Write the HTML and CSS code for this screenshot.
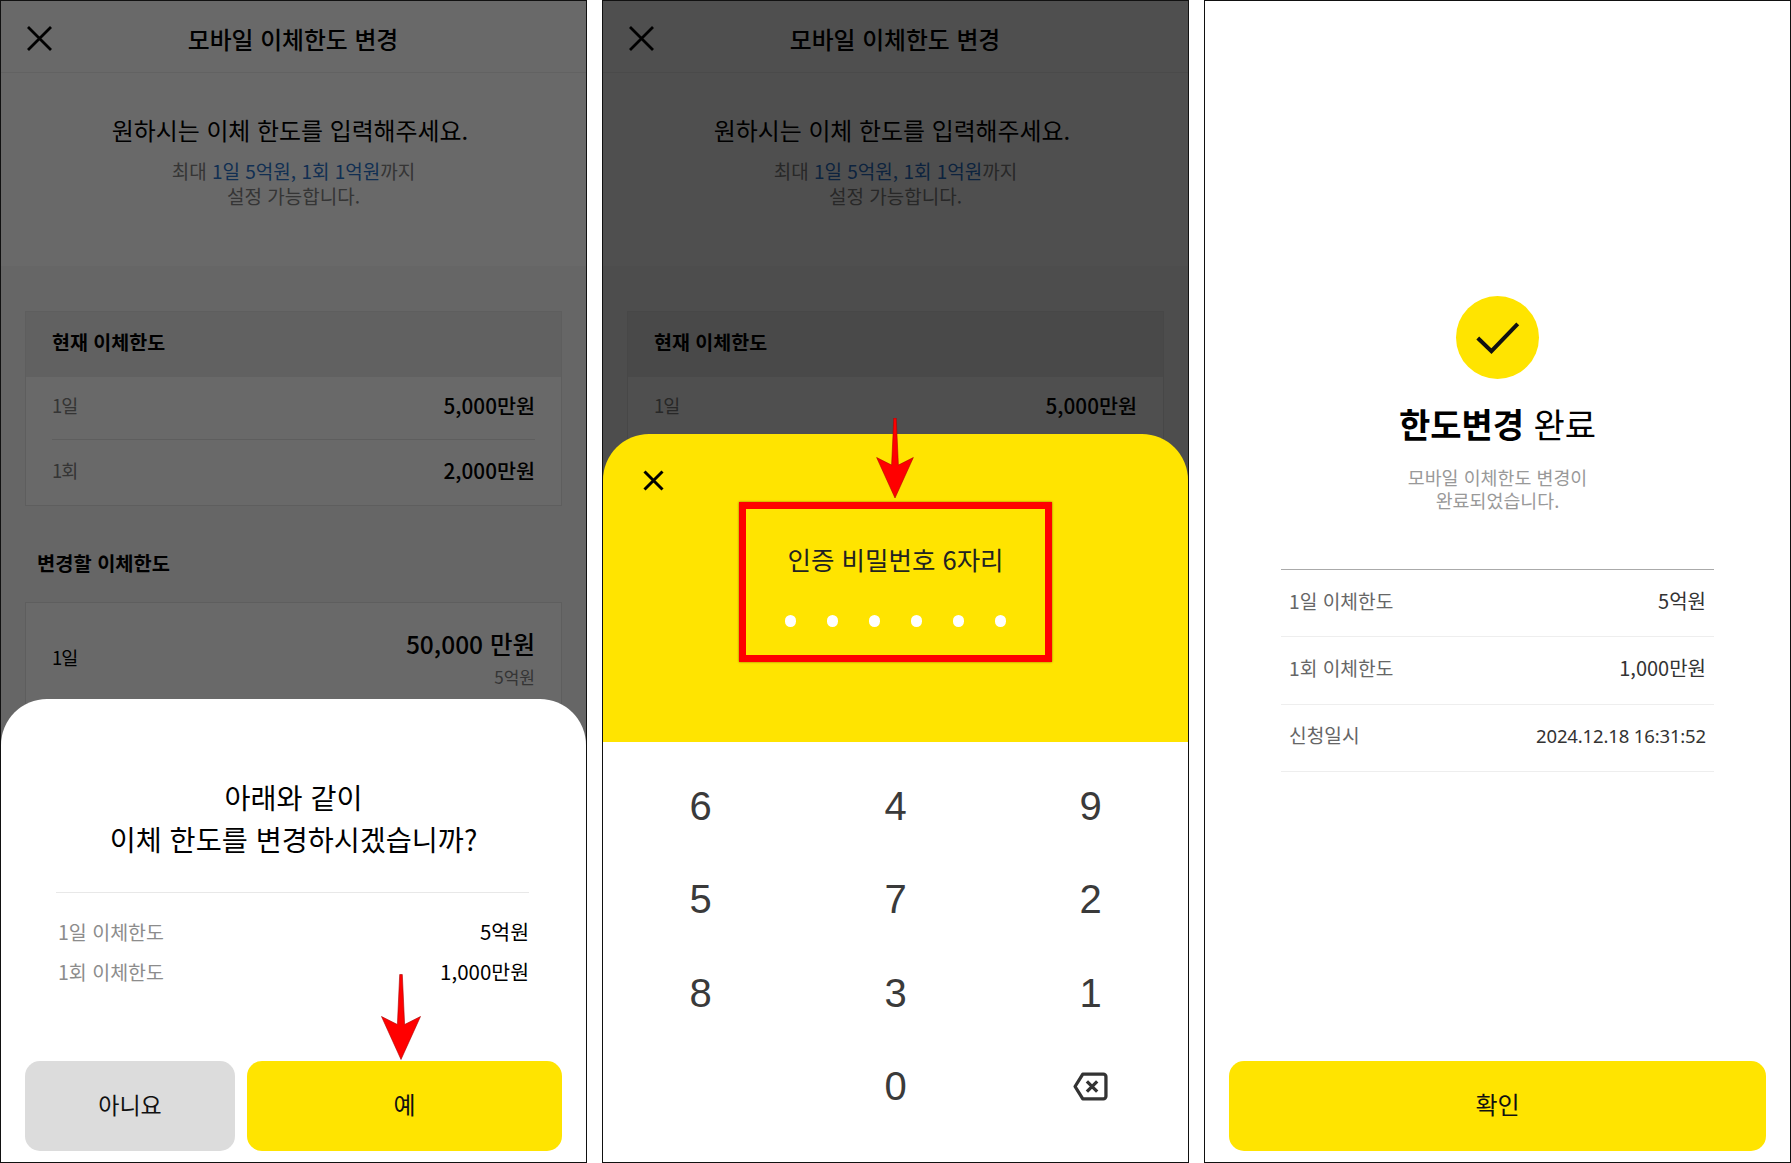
FILE: index.html
```html
<!DOCTYPE html>
<html lang="ko">
<head>
<meta charset="utf-8">
<title>모바일 이체한도 변경</title>
<link rel="stylesheet" href="styles.css">
</head>
<body>
<main class="page">

  <section class="panel">
    <header class="top">
      <svg class="x-icon" viewBox="0 0 25 25"><path d="M1 1 24 24M24 1 1 24"/></svg>
      <h1 class="top-title">모바일 이체한도 변경</h1>
    </header>
    <div class="intro">
      <p class="intro-lead">원하시는 이체 한도를 입력해주세요.</p>
      <p class="intro-sub">최대 <em>1일 5억원, 1회 1억원</em>까지<br>설정 가능합니다.</p>
    </div>
    <div class="content">
      <div class="card">
        <h2 class="card-head">현재 이체한도</h2>
        <div class="card-row"><span class="card-key">1일</span><strong class="card-val">5,000만원</strong></div>
        <div class="card-row"><span class="card-key">1회</span><strong class="card-val">2,000만원</strong></div>
      </div>
      <h2 class="section-title">변경할 이체한도</h2>
      <div class="card">
        <div class="input-row">
          <span class="input-key">1일</span>
          <div class="input-val"><strong>50,000 만원</strong><small>5억원</small></div>
        </div>
      </div>
    </div>
    <div class="dim dim-light"></div>
    <div class="sheet">
      <h2 class="sheet-title">아래와 같이<br>이체 한도를 변경하시겠습니까?</h2>
      <hr class="sheet-rule">
      <dl class="sheet-list">
        <div class="sheet-row"><dt>1일 이체한도</dt><dd>5억원</dd></div>
        <div class="sheet-row"><dt>1회 이체한도</dt><dd>1,000만원</dd></div>
      </dl>
      <div class="sheet-actions">
        <button class="btn btn-no">아니요</button>
        <button class="btn btn-yes">예</button>
      </div>
    </div>
    <svg class="arrow arrow-yes" viewBox="0 0 40 85"><path d="M18.700 0H21.300L23.600 50 39.500 42 20 85 .5 42 16.400 50Z"/></svg>
  </section>

  <section class="panel">
    <header class="top">
      <svg class="x-icon" viewBox="0 0 25 25"><path d="M1 1 24 24M24 1 1 24"/></svg>
      <h1 class="top-title">모바일 이체한도 변경</h1>
    </header>
    <div class="intro">
      <p class="intro-lead">원하시는 이체 한도를 입력해주세요.</p>
      <p class="intro-sub">최대 <em>1일 5억원, 1회 1억원</em>까지<br>설정 가능합니다.</p>
    </div>
    <div class="content">
      <div class="card">
        <h2 class="card-head">현재 이체한도</h2>
        <div class="card-row"><span class="card-key">1일</span><strong class="card-val">5,000만원</strong></div>
      </div>
    </div>
    <div class="dim dim-heavy"></div>
    <div class="pin-sheet">
      <div class="pin-top">
        <svg class="pin-close" viewBox="0 0 21 21"><path d="M1.5 1.5 19.5 19.5M19.5 1.5 1.5 19.5"/></svg>
        <div class="pin-box">
          <p class="pin-label">인증 비밀번호 6자리</p>
          <div class="pin-dots"><i></i><i></i><i></i><i></i><i></i><i></i></div>
        </div>
      </div>
      <div class="keypad">
        <span class="key">6</span><span class="key">4</span><span class="key">9</span>
        <span class="key">5</span><span class="key">7</span><span class="key">2</span>
        <span class="key">8</span><span class="key">3</span><span class="key">1</span>
        <span class="key"></span><span class="key">0</span>
        <span class="key"><svg class="back-icon" viewBox="0 0 34 28"><path d="M9.500 2H29.500A2.500 2.500 0 0 1 32 4.500V23.500A2.500 2.500 0 0 1 29.500 26H9.500L2 14Z"/><path d="M13.500 9 23.500 19M23.500 9 13.500 19"/></svg></span>
      </div>
    </div>
    <svg class="arrow arrow-pin" viewBox="0 0 40 85"><path d="M18.700 0H21.300L23.600 50 39.500 42 20 85 .5 42 16.400 50Z"/></svg>
  </section>

  <section class="panel panel-done">
    <div class="done-mark">
      <svg viewBox="0 0 82 82"><path d="M21.500 41.500 35 54.500 61 27.500"/></svg>
    </div>
    <h2 class="done-title"><b>한도변경</b> 완료</h2>
    <p class="done-sub">모바일 이체한도 변경이<br>완료되었습니다.</p>
    <dl class="done-list">
      <div class="done-row"><dt>1일 이체한도</dt><dd>5억원</dd></div>
      <div class="done-row"><dt>1회 이체한도</dt><dd>1,000만원</dd></div>
      <div class="done-row"><dt>신청일시</dt><dd class="done-date">2024.12.18 16:31:52</dd></div>
    </dl>
    <button class="btn btn-yes btn-done">확인</button>
  </section>

</main>
</body>
</html>
```
FILE: styles.css
```css
* { box-sizing: border-box; }
html, body { margin: 0; padding: 0; background: #fff; }
body {
  font-family: "Noto Sans CJK KR", "Noto Sans", sans-serif;
  color: #000;
}
h1, h2, p, dl, dd, dt { margin: 0; font-weight: 400; }

.page {
  display: grid;
  grid-template-columns: repeat(3, 587px);
  column-gap: 15px;
  width: 1791px;
  height: 1163px;
}
.panel {
  position: relative;
  height: 1163px;
  overflow: hidden;
  border: 1px solid #111;
  background: #fff;
}

/* base screen */
.top {
  display: grid;
  grid-template-columns: 26px 1fr 26px;
  align-items: center;
  height: 72px;
  padding: 4px 26px 0;
  border-bottom: 1px solid #eee;
}
.x-icon { width: 25px; height: 25px; }
.x-icon path { fill: none; stroke: #000; stroke-width: 2.800; }
.top-title {
  font-size: 23.800px;
  font-weight: 500;
  line-height: 34px;
  text-align: center;
  margin-left: -1px;
}
.intro {
  height: 193px;
  padding-top: 40px;
  text-align: center;
}
.intro-lead { padding-right: 7px; font-size: 23.900px; line-height: 34px; }
.intro-sub {
  margin-top: 11px;
  font-size: 19px;
  line-height: 25px;
  color: #808080;
}
.intro-sub em { font-style: normal; color: #2a72c8; }
.content {
  min-height: 900px;
  padding: 45px 24px 0;
  background: #f7f7f7;
}
.card {
  border: 1px solid #e4e4e4;
  background: #fff;
}
.card-head {
  height: 65px;
  padding-left: 26px;
  font-size: 19.500px;
  font-weight: 700;
  line-height: 59px;
  background: #ececec;
}
.card-row {
  display: flex;
  justify-content: space-between;
  align-items: center;
  height: 62px;
  margin: 0 26px;
  padding-bottom: 6px;
}
.card-row + .card-row {
  height: 66px;
  padding-bottom: 5px;
  border-top: 1px solid #e4e4e4;
}
.card-key { font-size: 18.500px; letter-spacing: -1px; color: #808080; }
.card-val { font-size: 20.700px; font-weight: 500; }
.section-title {
  margin-top: 42px;
  padding-left: 12px;
  font-size: 19.800px;
  font-weight: 700;
  line-height: 30px;
}
.section-title + .card { margin-top: 24px; }
.input-row {
  display: flex;
  justify-content: space-between;
  align-items: center;
  height: 110px;
  padding: 0 26px;
}
.input-key { margin-bottom: 3px; font-size: 18.500px; letter-spacing: -1px; }
.input-val {
  display: flex;
  flex-direction: column;
  align-items: flex-end;
  align-self: flex-start;
  padding-top: 24px;
}
.input-val strong { font-size: 24.500px; font-weight: 500; line-height: 34px; }
.input-val small { margin-top: 2px; font-size: 17px; line-height: 28px; color: #808080; }

/* dim layers */
.dim { position: absolute; inset: 0; }
.dim-light { background: rgba(0, 0, 0, .59); }
.dim-heavy { background: rgba(0, 0, 0, .69); }

/* confirm sheet */
.sheet {
  position: absolute;
  left: 0;
  right: 0;
  bottom: 0;
  display: flex;
  flex-direction: column;
  height: 463px;
  padding: 77px 24px 11px;
  background: #fff;
  border-radius: 46px 46px 0 0;
}
.sheet-title {
  font-size: 28.300px;
  line-height: 42px;
  text-align: center;
}
.sheet-rule {
  width: 473px;
  height: 1px;
  margin: 32px 0 0 31px;
  border: 0;
  background: #e8e8e8;
}
.sheet-list { margin: 18px 9px 0; }
.sheet-row {
  display: flex;
  justify-content: space-between;
  align-items: center;
  height: 40px;
  padding: 0 24px;
  font-size: 19.500px;
}
.sheet-row dt { color: #8c8c8c; }
.sheet-row dd { font-size: 20.500px; }
.sheet-actions {
  display: flex;
  gap: 12px;
  margin-top: auto;
}
.btn {
  height: 90px;
  padding: 0 0 5px;
  border: 0;
  border-radius: 15px;
  font-family: inherit;
  font-size: 24px;
  color: #111;
}
.btn-no { flex: 0 0 210px; font-size: 23px; background: #dcdcdc; }
.btn-yes { flex: 1; background: #ffe400; }

/* annotation arrows */
.arrow { position: absolute; }
.arrow path { fill: #f00; stroke: #a00; stroke-width: .6; }
.arrow-yes { left: 380px; top: 973px; width: 40px; height: 86px; }
.arrow-pin { left: 273px; top: 417px; width: 38px; height: 80px; }

/* PIN sheet */
.pin-sheet {
  position: absolute;
  left: 0;
  right: 0;
  bottom: 0;
  display: flex;
  flex-direction: column;
  height: 728px;
}
.pin-top {
  position: relative;
  height: 308px;
  padding-top: 68px;
  background: #ffe400;
  border-radius: 46px 46px 0 0;
}
.pin-close {
  position: absolute;
  left: 40px;
  top: 36px;
  width: 21px;
  height: 21px;
}
.pin-close path { fill: none; stroke: #000; stroke-width: 3; }
.pin-box {
  display: flex;
  flex-direction: column;
  align-items: center;
  width: 313px;
  height: 160px;
  margin: 0 auto;
  padding-top: 32px;
  border: 7px solid #f00;
  box-shadow: 0 0 2px #8a6a00;
}
.pin-label { font-size: 25.500px; line-height: 36px; color: #222; }
.pin-dots { display: flex; gap: 30.500px; margin-top: 38px; }
.pin-dots i {
  width: 11.500px;
  height: 11.500px;
  border-radius: 50%;
  background: #fff;
}
.keypad {
  flex: 1;
  display: grid;
  grid-template-columns: repeat(3, 1fr);
  grid-auto-rows: 93.300px;
  padding-top: 18px;
  background: #fff;
}
.key {
  display: flex;
  align-items: center;
  justify-content: center;
  font-family: "Liberation Sans", Arial, sans-serif;
  font-size: 40px;
  color: #3a3a3a;
}
.back-icon { width: 35px; height: 29px; }
.back-icon path {
  fill: none;
  stroke: #333;
  stroke-width: 3.200;
  stroke-linejoin: round;
}

/* done screen */
.panel-done {
  display: flex;
  flex-direction: column;
  padding-top: 295px;
}
.done-mark {
  width: 83px;
  height: 83px;
  margin: 0 auto;
  border-radius: 50%;
  background: #ffe400;
}
.done-mark svg { display: block; width: 83px; height: 83px; }
.done-mark path { fill: none; stroke: #111; stroke-width: 4; }
.done-title {
  margin-top: 22px;
  font-size: 34px;
  line-height: 46px;
  text-align: center;
}
.done-title b { font-weight: 700; }
.done-sub {
  margin-top: 19px;
  font-size: 18.400px;
  line-height: 23px;
  text-align: center;
  color: #999;
}
.done-list {
  margin: 57px 76px 0;
  border-top: 1px solid #aaa;
}
.done-row {
  display: flex;
  justify-content: space-between;
  align-items: center;
  height: 67.300px;
  padding: 0 8px 5px;
  font-size: 19.200px;
  color: #333;
  border-bottom: 1px solid #eee;
}
.done-row dt { color: #666; }
.done-row dd { font-size: 20px; }
.done-row .done-date {
  font-family: "Noto Sans", sans-serif;
  font-size: 18.500px;
  letter-spacing: -.15px;
}
.btn-done {
  flex: none;
  height: 90px;
  margin: auto 24px 11px;
}
```
